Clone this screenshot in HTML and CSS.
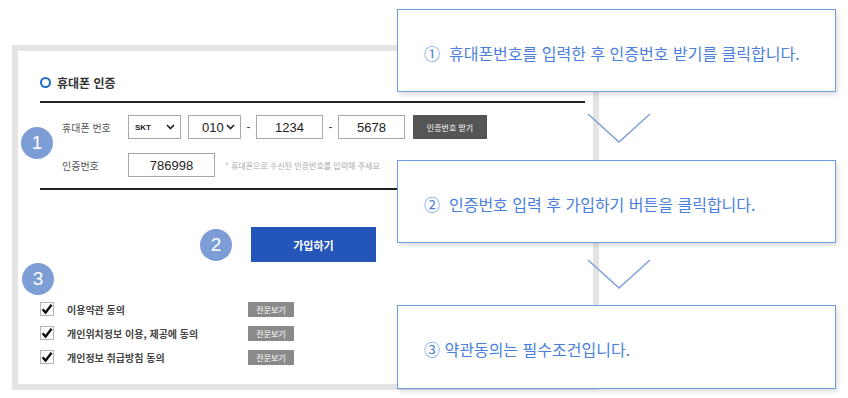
FILE: index.html
```html
<!DOCTYPE html>
<html lang="ko">
<head>
<meta charset="utf-8">
<title>휴대폰 인증 안내</title>
<link rel="stylesheet" href="styles.css">
</head>
<body>
<div class="stage">
  <section class="panel">
    <h2 class="title"><span class="radio"></span>휴대폰 인증</h2>
    <div class="form">
      <span class="badge badge-1">1</span>
      <div class="row">
        <span class="label">휴대폰 번호</span>
        <div class="select select-carrier"><span>SKT</span><svg class="caret" width="9" height="6" viewBox="0 0 9 6"><path d="M1 1 L4.5 4.5 L8 1" fill="none" stroke="#222" stroke-width="1.6"/></svg></div>
        <div class="select select-prefix"><span>010</span><svg class="caret" width="9" height="6" viewBox="0 0 9 6"><path d="M1 1 L4.5 4.5 L8 1" fill="none" stroke="#222" stroke-width="1.6"/></svg></div>
        <span class="dash">-</span>
        <input class="field field-num" type="text" value="1234" readonly>
        <span class="dash">-</span>
        <input class="field field-num" type="text" value="5678" readonly>
        <button class="btn-code" type="button">인증번호 받기</button>
      </div>
      <div class="row">
        <span class="label">인증번호</span>
        <input class="field field-code" type="text" value="786998" readonly>
        <span class="hint">* 휴대폰으로 수신된 인증번호를 입력해 주세요</span>
      </div>
    </div>
    <div class="submit-row">
      <span class="badge">2</span>
      <button class="btn-join" type="button">가입하기</button>
    </div>
    <span class="badge badge-3">3</span>
    <ul class="agree">
      <li><span class="check"><svg width="12" height="12" viewBox="0 0 12 12"><path d="M1.5 6.2 L4.6 9.6 L10.6 1.8" fill="none" stroke="#111" stroke-width="2.4"/></svg></span><span class="agree-label">이용약관 동의</span><button class="btn-view" type="button">전문보기</button></li>
      <li><span class="check"><svg width="12" height="12" viewBox="0 0 12 12"><path d="M1.5 6.2 L4.6 9.6 L10.6 1.8" fill="none" stroke="#111" stroke-width="2.4"/></svg></span><span class="agree-label">개인위치정보 이용, 제공에 동의</span><button class="btn-view" type="button">전문보기</button></li>
      <li><span class="check"><svg width="12" height="12" viewBox="0 0 12 12"><path d="M1.5 6.2 L4.6 9.6 L10.6 1.8" fill="none" stroke="#111" stroke-width="2.4"/></svg></span><span class="agree-label">개인정보 취급방침 동의</span><button class="btn-view" type="button">전문보기</button></li>
    </ul>
  </section>

  <div class="guide">
    <div class="note">①&nbsp; 휴대폰번호를 입력한 후 인증번호 받기를 클릭합니다.</div>
    <svg class="arrow arrow-1" width="64" height="30" viewBox="0 0 64 30"><path d="M1 1 L32 29 L63 1" fill="none" stroke="#7f9fd8" stroke-width="1.5"/></svg>
    <div class="note">②&nbsp; 인증번호 입력 후 가입하기 버튼을 클릭합니다.</div>
    <svg class="arrow arrow-2" width="64" height="30" viewBox="0 0 64 30"><path d="M1 1 L32 29 L63 1" fill="none" stroke="#7f9fd8" stroke-width="1.5"/></svg>
    <div class="note note-last">③ 약관동의는 필수조건입니다.</div>
  </div>
</div>
</body>
</html>
```

FILE: styles.css
```css
html, body {
  margin: 0;
  padding: 0;
  background: #fff;
}

body {
  font-family: "Noto Sans CJK KR", "Noto Sans", sans-serif;
  color: #444;
}

.stage {
  position: relative;
  width: 848px;
  height: 398px;
  overflow: hidden;
}

/* ---------- left panel ---------- */
.panel {
  position: relative;
  margin: 45px 0 0 12px;
  width: 587px;
  height: 345px;
  box-sizing: border-box;
  border: 6px solid #e4e4e4;
  padding: 21px 8px 0 22px;
  background: #fff;
}

.title {
  display: flex;
  align-items: center;
  gap: 6px;
  margin: 0;
  height: 20px;
  font-size: 12px;
  font-weight: 700;
  color: #333;
}

.radio {
  width: 11px;
  height: 11px;
  box-sizing: border-box;
  border: 2.5px solid #1c6dd0;
  border-radius: 50%;
}

.form {
  margin-top: 9px;
  border-top: 2px solid #222;
  border-bottom: 2px solid #222;
  padding: 12px 0 11px;
  display: flex;
  flex-direction: column;
  gap: 14px;
}

.row {
  display: flex;
  align-items: center;
  height: 24px;
}

.label {
  width: 88px;
  flex-shrink: 0;
  box-sizing: border-box;
  padding-left: 22px;
  font-size: 10px;
  color: #555;
  white-space: nowrap;
}

.select {
  display: flex;
  align-items: center;
  justify-content: space-between;
  width: 53px;
  height: 24px;
  box-sizing: border-box;
  border: 1px solid #a8a8a8;
  padding: 0 5px 0 6px;
  color: #222;
}

.select-carrier {
  font-family: "Liberation Sans", sans-serif;
  font-size: 8px;
  font-weight: 700;
  margin-right: 7px;
}

.select-prefix {
  font-family: "Liberation Sans", sans-serif;
  font-size: 13px;
  padding-left: 13px;
}

.dash {
  width: 15px;
  text-align: center;
  font-family: "Liberation Sans", sans-serif;
  font-size: 12px;
  color: #444;
}

.field {
  height: 24px;
  box-sizing: border-box;
  border: 1px solid #a8a8a8;
  border-radius: 0;
  padding: 0;
  margin: 0;
  text-align: center;
  font-family: "Liberation Sans", sans-serif;
  font-size: 13px;
  color: #222;
  background: #fff;
  outline: none;
}

.field-num {
  width: 67px;
}

.field-code {
  width: 87px;
}

.btn-code {
  margin-left: 8px;
  width: 74px;
  height: 24px;
  border: 0;
  padding: 0;
  background: #555;
  color: #fff;
  font-family: "Noto Sans CJK KR", sans-serif;
  font-size: 8px;
}

.hint {
  margin-left: 10px;
  font-size: 8px;
  color: #aaa;
  white-space: nowrap;
}

/* badges */
.badge {
  display: flex;
  align-items: center;
  justify-content: center;
  width: 32px;
  height: 32px;
  border-radius: 50%;
  background: #7d9dd6;
  color: #fff;
  font-family: "Liberation Sans", sans-serif;
  font-size: 19px;
  flex-shrink: 0;
}

.badge-1 {
  position: absolute;
  left: 3px;
  top: 76px;
}

.badge-3 {
  margin: 1px 0 0 -18px;
}

.submit-row {
  display: flex;
  align-items: center;
  gap: 19px;
  margin: 37px 0 0 160px;
  height: 35px;
}

.btn-join {
  width: 125px;
  height: 35px;
  border: 0;
  padding: 0;
  background: #2456b9;
  color: #fff;
  font-family: "Noto Sans CJK KR", sans-serif;
  font-size: 11px;
  font-weight: 700;
}

.agree {
  list-style: none;
  margin: 2px 0 0;
  padding: 0;
}

.agree li {
  display: flex;
  align-items: center;
  height: 24px;
}

.check {
  display: flex;
  align-items: center;
  justify-content: center;
  width: 14px;
  height: 14px;
  box-sizing: border-box;
  border: 1px solid #b5b5b5;
  background: #fff;
  margin-right: 13px;
}

.agree-label {
  width: 181px;
  font-size: 10px;
  font-weight: 700;
  color: #444;
  white-space: nowrap;
}

.btn-view {
  width: 46px;
  height: 15px;
  border: 0;
  padding: 0;
  background: #8a8a8a;
  color: #fff;
  font-family: "Noto Sans CJK KR", sans-serif;
  font-size: 8px;
  line-height: 15px;
}

/* ---------- guide callouts ---------- */
.guide {
  position: absolute;
  left: 397px;
  top: 9px;
  width: 439px;
  display: flex;
  flex-direction: column;
}

.note {
  display: flex;
  align-items: center;
  height: 83px;
  box-sizing: border-box;
  border: 1px solid #6f9be6;
  background: #fff;
  box-shadow: 2px 3px 4px rgba(0, 0, 0, 0.12);
  padding: 4px 0 0 26px;
  font-size: 16px;
  color: #4a80dc;
  white-space: nowrap;
}

.note-last {
  height: 84px;
}

.arrow {
  display: block;
  margin-left: 190px;
}

.arrow-1 {
  margin-top: 21px;
  margin-bottom: 17px;
}

.arrow-2 {
  margin-top: 16px;
  margin-bottom: 16px;
}
```
